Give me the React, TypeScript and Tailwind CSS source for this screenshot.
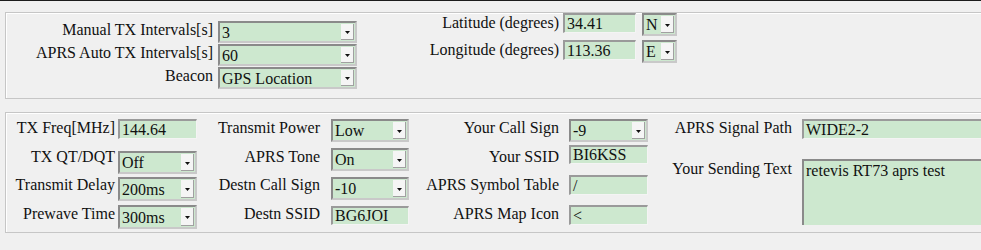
import React from "react";

const FONT = { fontFamily: '"Liberation Serif", "Times New Roman", serif' };

function Arrow() {
  return (
    <svg width="5" height="3" viewBox="0 0 5 3" className="block">
      <path d="M0 0 H5 L2.5 3 Z" fill="#111" />
    </svg>
  );
}

function Sel({ value, className }: { value: string; className: string }) {
  return (
    <div
      className={`flex items-stretch border-2 border-t-[#8a8a8a] border-l-[#8a8a8a] border-b-[#c9c9c9] border-r-[#c9c9c9] bg-[#cde8cf] ${className}`}
    >
      <div className="flex-1 pl-[2px] pt-[1px] leading-[18px] text-[16px] text-[#111] whitespace-nowrap overflow-hidden flex items-center">
        {value}
      </div>
      <div className="w-[13px] my-[1px] mr-[1px] bg-[#f5f5f5] border-r border-b border-r-[#a0a0a0] border-b-[#a0a0a0] flex items-center justify-center pt-[2px]">
        <Arrow />
      </div>
    </div>
  );
}

function Inp({ value, className }: { value: string; className: string }) {
  return (
    <div
      className={`flex items-center border-t-2 border-l-2 border-b border-r border-t-[#9a9a9a] border-l-[#9a9a9a] border-b-[#f4f4f4] border-r-[#f4f4f4] bg-[#cde8cf] pl-[2px] leading-[18px] text-[16px] text-[#111] whitespace-nowrap overflow-hidden ${className}`}
    >
      {value}
    </div>
  );
}

function Label({ text, className }: { text: string; className: string }) {
  return (
    <div className={`text-right text-[16px] leading-[18px] text-[#111] whitespace-nowrap ${className}`}>
      {text}
    </div>
  );
}

const panel =
  "border border-[#c6c6c6] shadow-[inset_1px_1px_0_#ffffff] w-[1000px] ml-[5px] border-r-0";

export default function App() {
  return (
    <div className="w-[981px] h-[250px] overflow-hidden bg-[#f0f0f0]" style={FONT}>
      <div className="h-[1px] bg-[#1c1c1c]" />
      <div className="h-[11px]" />
      {/* Panel 1 */}
      <div className={`${panel} h-[87px] flex`}>
        <div className="flex flex-col pt-[8px] gap-[1px]">
          {[
            ["Manual TX Intervals[s]", "3"],
            ["APRS Auto TX Intervals[s]", "60"],
            ["Beacon", "GPS Location"],
          ].map(([l, v]) => (
            <div key={l} className="flex items-start">
              <Label text={l} className="w-[207px]" />
              <Sel value={v} className="ml-[5px] w-[139px] h-[22px]" />
            </div>
          ))}
        </div>
        <div className="flex flex-col pt-[0px]">
          <div className="flex items-start h-[27px]">
            <Label text="Latitude (degrees)" className="w-[202px] mt-[1px]" />
            <Inp value="34.41" className="ml-[4px] w-[73px] h-[20px]" />
            <Sel value="N" className="ml-[6px] w-[35px] h-[23px]" />
          </div>
          <div className="flex items-start">
            <Label text="Longitude (degrees)" className="w-[202px] mt-[1px]" />
            <Inp value="113.36" className="ml-[4px] w-[73px] h-[20px]" />
            <Sel value="E" className="ml-[6px] w-[35px] h-[23px]" />
          </div>
        </div>
      </div>
      <div className="h-[13px]" />
      {/* Panel 2 */}
      <div className={`${panel} h-[121px] flex pt-[6px]`}>
        {/* Column 1 */}
        <div className="flex flex-col">
          <div className="flex items-start h-[29px]">
            <Label text="TX Freq[MHz]" className="w-[109px]" />
            <Inp value="144.64" className="ml-[3px] w-[79px] h-[20px]" />
          </div>
          <div className="flex items-start h-[28px]">
            <Label text="TX QT/DQT" className="w-[109px]" />
            <Sel value="Off" className="ml-[3px] w-[79px] h-[23px] mt-[3px]" />
          </div>
          <div className="flex items-start h-[29px]">
            <Label text="Transmit Delay" className="w-[109px]" />
            <Sel value="200ms" className="ml-[3px] w-[79px] h-[24px] mt-[1px]" />
          </div>
          <div className="flex items-start">
            <Label text="Prewave Time" className="w-[109px]" />
            <Sel value="300ms" className="ml-[3px] w-[79px] h-[24px]" />
          </div>
        </div>
        {/* Column 2 */}
        <div className="flex flex-col">
          <div className="flex items-start h-[29px]">
            <Label text="Transmit Power" className="w-[123px]" />
            <Sel value="Low" className="ml-[11px] w-[78px] h-[23px]" />
          </div>
          <div className="flex items-start h-[28px]">
            <Label text="APRS Tone" className="w-[123px]" />
            <Sel value="On" className="ml-[11px] w-[78px] h-[23px]" />
          </div>
          <div className="flex items-start h-[29px]">
            <Label text="Destn Call Sign" className="w-[123px]" />
            <Sel value="-10" className="ml-[11px] w-[78px] h-[23px] mt-[1px]" />
          </div>
          <div className="flex items-start">
            <Label text="Destn SSID" className="w-[123px]" />
            <Inp value="BG6JOI" className="ml-[11px] w-[78px] h-[19px] mt-[1px]" />
          </div>
        </div>
        {/* Column 3 */}
        <div className="flex flex-col">
          <div className="flex items-start h-[29px]">
            <Label text="Your Call Sign" className="w-[150px]" />
            <Sel value="-9" className="ml-[10px] w-[79px] h-[23px]" />
          </div>
          <div className="flex items-start h-[28px]">
            <Label text="Your SSID" className="w-[150px]" />
            <Inp value="BI6KSS" className="ml-[10px] w-[79px] h-[19px] -mt-[3px]" />
          </div>
          <div className="flex items-start h-[29px]">
            <Label text="APRS Symbol Table" className="w-[150px]" />
            <Inp value="/" className="ml-[10px] w-[79px] h-[20px] -mt-[1px]" />
          </div>
          <div className="flex items-start">
            <Label text="APRS Map Icon" className="w-[150px]" />
            <Inp value="<" className="ml-[10px] w-[79px] h-[20px]" />
          </div>
        </div>
        {/* Column 4 */}
        <div className="flex flex-col">
          <div className="flex items-start h-[40px]">
            <Label text="APRS Signal Path" className="w-[144px]" />
            <Inp value="WIDE2-2" className="ml-[10px] w-[200px] h-[20px]" />
          </div>
          <div className="flex items-start">
            <Label text="Your Sending Text" className="w-[144px] mt-[1px]" />
            <div className="ml-[10px] w-[200px] h-[66px] border-t-2 border-l-2 border-t-[#8a8a8a] border-l-[#8a8a8a] bg-[#cde8cf] pl-[2px] pt-[1px] text-[16px] leading-[18px] text-[#111]">
              retevis RT73 aprs test
            </div>
          </div>
        </div>
      </div>
    </div>
  );
}
